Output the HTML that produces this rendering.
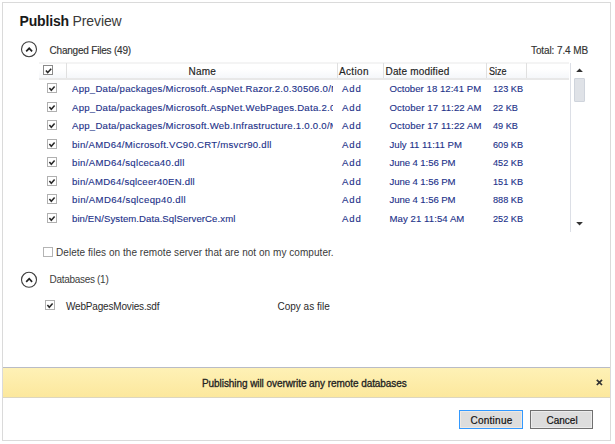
<!DOCTYPE html>
<html><head><meta charset="utf-8">
<style>
html,body{margin:0;padding:0;background:#fff;width:615px;height:444px;overflow:hidden}
body{position:relative;font-family:"Liberation Sans",sans-serif;}
.a{position:absolute;white-space:nowrap;line-height:1}
#dlg{position:absolute;left:2px;top:2px;width:607px;height:437px;border:1px solid #dadada;}
.cb{position:absolute;width:8px;height:8px;border:1px solid #b0b0b0;background:#fff}
.cb svg{position:absolute;left:0;top:0}
.row{color:#1c3189;font-size:9.6px;-webkit-text-stroke:0.12px #1c3189}
.hd{color:#222;font-size:10px;-webkit-text-stroke:0.15px #222}
.sep{position:absolute;top:63px;width:1px;height:15px;background:#e0e0e0}
</style></head><body>
<div id="dlg"></div>

<div class="a" style="left:19.5px;top:14px;font-size:14px;color:#1a1a1a;font-weight:bold;letter-spacing:-0.15px">Publish</div>
<div class="a" style="left:72.5px;top:14px;font-size:14px;color:#3a3a3a;letter-spacing:-0.1px">Preview</div>

<svg class="a" style="left:20px;top:40px" width="18" height="18" viewBox="0 0 18 18">
<circle cx="9" cy="9.2" r="7.5" fill="none" stroke="#3f3f3f" stroke-width="1.1"/>
<path d="M6.2 11.4 L9.2 8.3 L12.1 11.4" fill="none" stroke="#222" stroke-width="1.7"/>
</svg>
<div class="a" style="left:49.5px;top:45.5px;font-size:10px;color:#333;-webkit-text-stroke:0.15px #333;letter-spacing:-0.2px">Changed Files (49)</div>
<div class="a" style="left:531px;top:45.5px;font-size:10px;color:#333;-webkit-text-stroke:0.15px #333;letter-spacing:-0.1px">Total: 7.4 MB</div>

<div class="a" style="left:39px;top:62px;width:530px;height:14px;background:linear-gradient(#fff 0%,#fff 35%,#f5f7fa 100%);border-top:2px solid #f4f4f4;border-bottom:2px solid #e8e8e8"></div>
<div class="sep" style="left:66px"></div>
<div class="sep" style="left:337px"></div>
<div class="sep" style="left:383px"></div>
<div class="sep" style="left:486px"></div>
<div class="sep" style="left:526px"></div>
<div class="a" style="left:570px;top:63px;width:1px;height:169px;background:#dcdfe6"></div>
<div class="cb" style="left:43px;top:65px;border-color:#8a8a8a"><svg width="8" height="8" viewBox="0 0 8 8"><path d="M1.9 4.4 L3.7 6.5 L7.2 2.8" fill="none" stroke="#2a2a2a" stroke-width="1.55"/></svg></div>
<div class="a hd" style="left:188.5px;top:67px;letter-spacing:0.25px">Name</div>
<div class="a hd" style="left:339px;top:67px;letter-spacing:0.35px">Action</div>
<div class="a hd" style="left:385.5px;top:67px;letter-spacing:0.17px">Date modified</div>
<div class="a hd" style="left:488.5px;top:67px;transform:scaleX(0.9);transform-origin:0 0">Size</div>

<svg class="a" style="left:575px;top:67px" width="10" height="6" viewBox="0 0 10 6"><path d="M1.2 5.1 L4.55 1.5 L7.9 5.1 Z" fill="#333"/></svg>
<div class="a" style="left:574px;top:78px;width:9px;height:22px;background:#dfe2e7;border:1px solid #cfd4dc;border-radius:1px"></div>
<svg class="a" style="left:575px;top:221px" width="10" height="6" viewBox="0 0 10 6"><path d="M1.2 1 L4.55 4.6 L7.9 1 Z" fill="#333"/></svg>

<div class="cb" style="left:47px;top:83px"><svg width="8" height="8" viewBox="0 0 8 8"><path d="M1.4 4.0 L3.3 6.3 L6.6 2.5" fill="none" stroke="#2a2a2a" stroke-width="1.55"/></svg></div>
<div class="a row" style="left:72px;top:84px;width:261px;overflow:hidden;letter-spacing:0.25px">App_Data/packages/Microsoft.AspNet.Razor.2.0.30506.0/Microsoft.AspNet.Razor.2.0.30506.0.nupkg</div>
<div class="a row" style="left:342px;top:84px;letter-spacing:0.88px">Add</div>
<div class="a row" style="left:389.5px;top:84px;letter-spacing:0.028px">October 18 12:41 PM</div>
<div class="a row" style="left:492.5px;top:84px;transform:scaleX(0.955);transform-origin:0 0">123 KB</div>
<div class="cb" style="left:47px;top:102px"><svg width="8" height="8" viewBox="0 0 8 8"><path d="M1.4 4.0 L3.3 6.3 L6.6 2.5" fill="none" stroke="#2a2a2a" stroke-width="1.55"/></svg></div>
<div class="a row" style="left:72px;top:103px;width:261px;overflow:hidden;letter-spacing:0.25px">App_Data/packages/Microsoft.AspNet.WebPages.Data.2.0.30506.0/Microsoft.AspNet.WebPages.Data.nupkg</div>
<div class="a row" style="left:342px;top:103px;letter-spacing:0.88px">Add</div>
<div class="a row" style="left:389.5px;top:103px;letter-spacing:0.117px">October 17 11:22 AM</div>
<div class="a row" style="left:492.5px;top:103px;transform:scaleX(0.955);transform-origin:0 0">22 KB</div>
<div class="cb" style="left:47px;top:120px"><svg width="8" height="8" viewBox="0 0 8 8"><path d="M1.4 4.0 L3.3 6.3 L6.6 2.5" fill="none" stroke="#2a2a2a" stroke-width="1.55"/></svg></div>
<div class="a row" style="left:72px;top:121px;width:261px;overflow:hidden;letter-spacing:0.25px">App_Data/packages/Microsoft.Web.Infrastructure.1.0.0.0/Microsoft.Web.Infrastructure.nupkg</div>
<div class="a row" style="left:342px;top:121px;letter-spacing:0.88px">Add</div>
<div class="a row" style="left:389.5px;top:121px;letter-spacing:0.117px">October 17 11:22 AM</div>
<div class="a row" style="left:492.5px;top:121px;transform:scaleX(0.955);transform-origin:0 0">49 KB</div>
<div class="cb" style="left:47px;top:139px"><svg width="8" height="8" viewBox="0 0 8 8"><path d="M1.4 4.0 L3.3 6.3 L6.6 2.5" fill="none" stroke="#2a2a2a" stroke-width="1.55"/></svg></div>
<div class="a row" style="left:72px;top:140px;width:261px;overflow:hidden;letter-spacing:0.265px">bin/AMD64/Microsoft.VC90.CRT/msvcr90.dll</div>
<div class="a row" style="left:342px;top:140px;letter-spacing:0.88px">Add</div>
<div class="a row" style="left:389.5px;top:140px;letter-spacing:0.033px">July 11 11:11 PM</div>
<div class="a row" style="left:492.5px;top:140px;transform:scaleX(0.955);transform-origin:0 0">609 KB</div>
<div class="cb" style="left:47px;top:157px"><svg width="8" height="8" viewBox="0 0 8 8"><path d="M1.4 4.0 L3.3 6.3 L6.6 2.5" fill="none" stroke="#2a2a2a" stroke-width="1.55"/></svg></div>
<div class="a row" style="left:72px;top:158px;width:261px;overflow:hidden;letter-spacing:0.307px">bin/AMD64/sqlceca40.dll</div>
<div class="a row" style="left:342px;top:158px;letter-spacing:0.88px">Add</div>
<div class="a row" style="left:389.5px;top:158px;letter-spacing:-0.093px">June 4 1:56 PM</div>
<div class="a row" style="left:492.5px;top:158px;transform:scaleX(0.955);transform-origin:0 0">452 KB</div>
<div class="cb" style="left:47px;top:176px"><svg width="8" height="8" viewBox="0 0 8 8"><path d="M1.4 4.0 L3.3 6.3 L6.6 2.5" fill="none" stroke="#2a2a2a" stroke-width="1.55"/></svg></div>
<div class="a row" style="left:72px;top:177px;width:261px;overflow:hidden;letter-spacing:0.226px">bin/AMD64/sqlceer40EN.dll</div>
<div class="a row" style="left:342px;top:177px;letter-spacing:0.88px">Add</div>
<div class="a row" style="left:389.5px;top:177px;letter-spacing:-0.093px">June 4 1:56 PM</div>
<div class="a row" style="left:492.5px;top:177px;transform:scaleX(0.955);transform-origin:0 0">151 KB</div>
<div class="cb" style="left:47px;top:194px"><svg width="8" height="8" viewBox="0 0 8 8"><path d="M1.4 4.0 L3.3 6.3 L6.6 2.5" fill="none" stroke="#2a2a2a" stroke-width="1.55"/></svg></div>
<div class="a row" style="left:72px;top:195px;width:261px;overflow:hidden;letter-spacing:0.341px">bin/AMD64/sqlceqp40.dll</div>
<div class="a row" style="left:342px;top:195px;letter-spacing:0.88px">Add</div>
<div class="a row" style="left:389.5px;top:195px;letter-spacing:-0.093px">June 4 1:56 PM</div>
<div class="a row" style="left:492.5px;top:195px;transform:scaleX(0.955);transform-origin:0 0">888 KB</div>
<div class="cb" style="left:47px;top:213px"><svg width="8" height="8" viewBox="0 0 8 8"><path d="M1.4 4.0 L3.3 6.3 L6.6 2.5" fill="none" stroke="#2a2a2a" stroke-width="1.55"/></svg></div>
<div class="a row" style="left:72px;top:214px;width:261px;overflow:hidden;letter-spacing:0.07px">bin/EN/System.Data.SqlServerCe.xml</div>
<div class="a row" style="left:342px;top:214px;letter-spacing:0.88px">Add</div>
<div class="a row" style="left:389.5px;top:214px;letter-spacing:0.065px">May 21 11:54 AM</div>
<div class="a row" style="left:492.5px;top:214px;transform:scaleX(0.955);transform-origin:0 0">252 KB</div>

<div class="cb" style="left:43px;top:247px;border-color:#b4b4b4"></div>
<div class="a" style="left:56px;top:248px;font-size:10px;color:#3a3a3a;letter-spacing:0.05px">Delete files on the remote server that are not on my computer.</div>

<svg class="a" style="left:20px;top:270px" width="18" height="18" viewBox="0 0 18 18">
<circle cx="9" cy="9.8" r="7.5" fill="none" stroke="#3f3f3f" stroke-width="1.1"/>
<path d="M6.2 11.8 L9.2 8.7 L12.1 11.8" fill="none" stroke="#222" stroke-width="1.7"/>
</svg>
<div class="a" style="left:49.5px;top:275px;font-size:10px;color:#3d3d3d;letter-spacing:-0.3px">Databases (1)</div>

<div class="cb" style="left:45px;top:300px"><svg width="8" height="8" viewBox="0 0 8 8"><path d="M1.4 4.0 L3.3 6.3 L6.6 2.5" fill="none" stroke="#2a2a2a" stroke-width="1.55"/></svg></div>
<div class="a" style="left:66px;top:302px;font-size:10px;color:#2a2a2a;letter-spacing:-0.18px">WebPagesMovies.sdf</div>
<div class="a" style="left:277.5px;top:302px;font-size:10px;color:#2a2a2a">Copy as file</div>

<div class="a" style="left:3px;top:367px;width:607px;height:29px;background:linear-gradient(#fef1b6,#fce89d);border-top:1px solid #b9bcc6;border-bottom:1px solid #dcd6c0"></div>
<div class="a" style="left:202px;top:379px;font-size:10px;color:#222;-webkit-text-stroke:0.3px #222;letter-spacing:-0.07px">Publishing will overwrite any remote databases</div>
<svg class="a" style="left:595px;top:378px" width="9" height="9" viewBox="0 0 9 9"><path d="M1.8 1.8 L7.0 7.0 M7.0 1.8 L1.8 7.0" stroke="#333" stroke-width="1.7"/></svg>

<div class="a" style="left:459px;top:410px;width:62px;height:17px;background:#dddddd;border:1px solid #3399ff;box-shadow:inset 0 0 0 1px #efe9e3"></div>
<div class="a" style="left:470.5px;top:416px;font-size:10px;color:#111;letter-spacing:0.25px;-webkit-text-stroke:0.2px #111">Continue</div>
<div class="a" style="left:530px;top:410px;width:61px;height:17px;background:#dddddd;border:1px solid #707070;box-shadow:inset 0 0 0 1px #ececec"></div>
<div class="a" style="left:546.5px;top:416px;font-size:10px;color:#111;-webkit-text-stroke:0.2px #111">Cancel</div>
</body></html>
